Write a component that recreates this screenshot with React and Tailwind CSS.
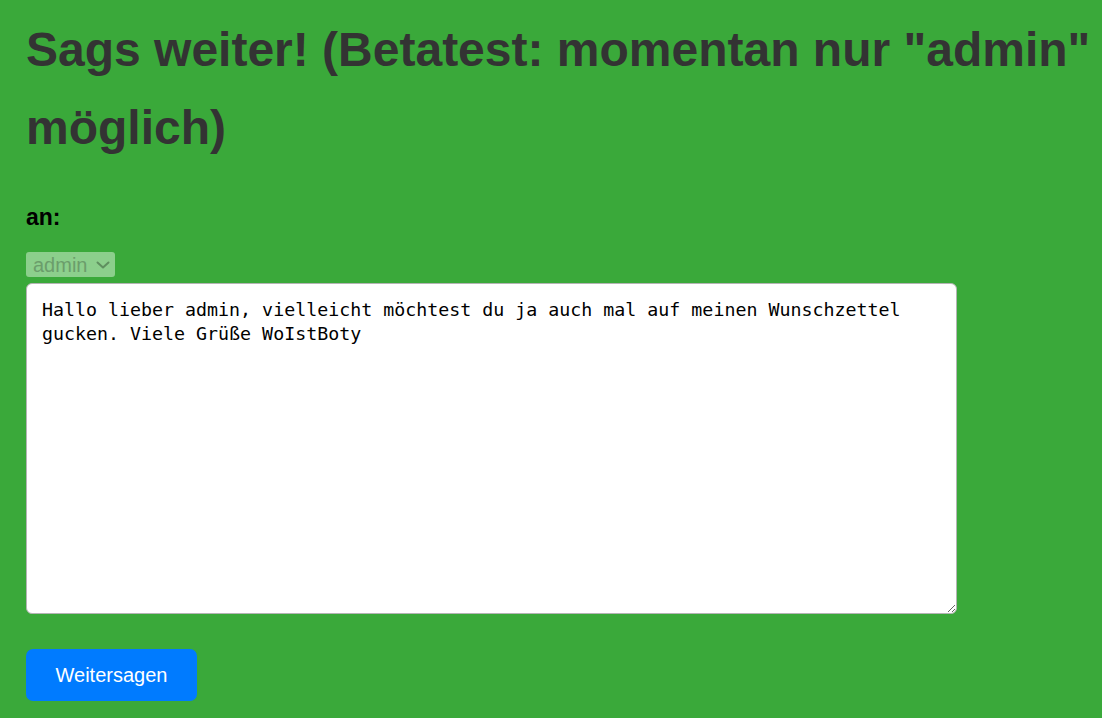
const message =
  "Hallo lieber admin, vielleicht möchtest du ja auch mal auf meinen Wunschzettel gucken. Viele Grüße WoIstBoty";

export default function App() {
  return (
    <div className="min-h-screen bg-[#3aa93a] pl-[26px] pr-[8px] pt-[11px] pb-4 font-['Liberation_Sans',Arial,sans-serif]">
      <h1 className="text-[48px] leading-[78px] font-bold text-[#333333]">
        Sags weiter! (Betatest: momentan nur "admin" möglich)
      </h1>

      <form className="mt-[38px]" onSubmit={e => e.preventDefault()}>
        <label className="block text-[23px] font-bold text-black leading-[25px]">an:</label>

        <div className="mt-[22px] flex">
          <div className="flex items-center gap-[9px] h-[25px] w-[89px] pl-[7px] rounded-[3px] bg-[#8ccf8c] text-[#6b9d6b] text-[20px] leading-none">
            admin
            <svg width="14" height="8" viewBox="0 0 14 8" fill="none" stroke="#5f8f5f" strokeWidth="2" strokeLinecap="round" strokeLinejoin="round">
              <polyline points="1.5,1.5 7,6.5 12.5,1.5" />
            </svg>
          </div>
        </div>

        <textarea
          className="mt-[6px] block w-[931px] h-[331px] rounded-[6px] border border-[#b4b4b4] bg-white px-[15px] py-[14px] text-[18.3px] leading-[24px] text-black font-['DejaVu_Sans_Mono',monospace] outline-none"
          defaultValue={message}
        />

        <button
          type="submit"
          className="mt-[35px] w-[171px] h-[52px] rounded-[7px] bg-[#007bff] text-white text-[20px]"
        >
          Weitersagen
        </button>
      </form>
    </div>
  );
}
